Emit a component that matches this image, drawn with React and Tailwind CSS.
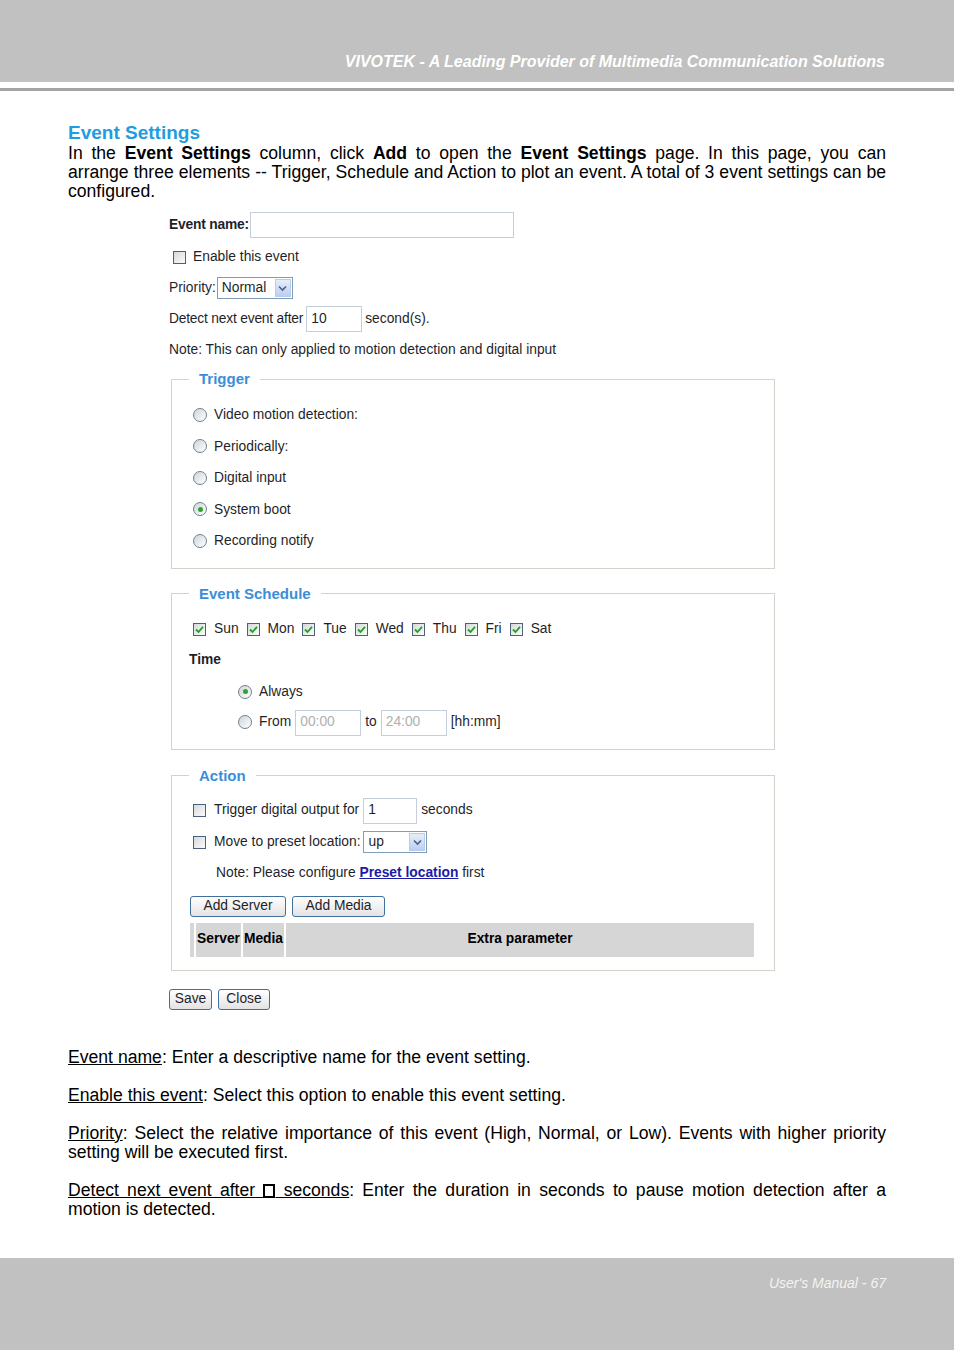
import React from "react"

function CheckBox({ checked }) {
  return (
    <span className="inline-flex w-[13px] h-[13px] shrink-0 items-center justify-center border border-[#4d6278] bg-linear-to-br from-[#d6d9dc] to-[#fbfbfb]">
      {checked && (
        <svg width="9" height="9" viewBox="0 0 9 9">
          <path d="M1 4.5 L3.5 7 L8 1.8" fill="none" stroke="#21a121" strokeWidth="1.8" />
        </svg>
      )}
    </span>
  )
}

function Radio({ checked }) {
  return (
    <span className="inline-flex w-[14px] h-[14px] shrink-0 items-center justify-center rounded-full border border-[#6f8091] bg-linear-to-br from-[#cfd4d9] to-white -translate-y-[1px]">
      {checked && <span className="w-[5px] h-[5px] rounded-full bg-[#2ca52c]" />}
    </span>
  )
}

function Select({ value, width }) {
  return (
    <span className={`inline-flex h-[22px] items-stretch border border-[#7f9db9] bg-white ${width}`}>
      <span className="flex-1 flex items-center px-[4px]">{value}</span>
      <span className="w-[16px] m-[1px] flex items-center justify-center border border-[#b9cbea] bg-linear-to-b from-[#e6eefb] to-[#bccff0]">
        <svg width="9" height="7" viewBox="0 0 9 7">
          <path d="M1 1.5 L4.5 5 L8 1.5" fill="none" stroke="#4d6185" strokeWidth="1.6" />
        </svg>
      </span>
    </span>
  )
}

function TextBox({ value, width, muted }) {
  return (
    <span
      className={`inline-flex h-[26px] items-center px-[4px] border border-[#c5cfdb] bg-white ${width} ${
        muted ? "text-[#b0b0b0]" : ""
      }`}
    >
      {value}
    </span>
  )
}

function Button({ children, width }) {
  return (
    <span
      className={`inline-flex h-[21px] items-center justify-center rounded-[3px] border border-[#41709c] bg-linear-to-b from-white to-[#e3e3e3] ${width}`}
    >
      {children}
    </span>
  )
}

function Fieldset({ legend, className, children }) {
  return (
    <fieldset className={`w-[604px] ml-[2px] border border-[#d3d3cc] ${className}`}>
      <legend className="ml-[17px] px-[10px] text-[15px] leading-[18px] font-bold text-[#3a8ed9]">
        {legend}
      </legend>
      {children}
    </fieldset>
  )
}

export default function App() {
  const days = ["Sun", "Mon", "Tue", "Wed", "Thu", "Fri", "Sat"]
  const triggers = [
    { label: "Video motion detection:", on: false },
    { label: "Periodically:", on: false },
    { label: "Digital input", on: false },
    { label: "System boot", on: true },
    { label: "Recording notify", on: false },
  ]

  return (
    <div className="w-[954px] h-[1350px] bg-white flex flex-col font-['Liberation_Sans',Arial,sans-serif] text-black">
      <header className="h-[82px] shrink-0 bg-[#c0c1c0] flex items-end justify-end pr-[69px] pb-[11px]">
        <span className="text-[16px] leading-[18px] font-bold italic text-white">
          VIVOTEK - A Leading Provider of Multimedia Communication Solutions
        </span>
      </header>
      <div className="mt-[6px] h-[3px] shrink-0 bg-[#a3a3a3]" />

      <main className="flex-1 px-[68px] pt-[31px]">
        <h2 className="text-[19px] leading-[22px] font-bold text-[#1f9de0]">Event Settings</h2>
        <div className="text-[17.6px] leading-[19px] text-justify">
          <p className="[text-align-last:justify]">
            In the <b>Event Settings</b> column, click <b>Add</b> to open the <b>Event Settings</b> page. In this
            page, you can
          </p>
          <p className="[text-align-last:justify]">
            arrange three elements -- Trigger, Schedule and Action to plot an event. A total of 3 event settings can
            be
          </p>
          <p>configured.</p>
        </div>

        {/* settings form */}
        <div className="ml-[101px] mt-[11px] text-[13.8px] text-[#1f1f2a]">
          <div className="h-[26px] flex items-center gap-[1px]">
            <span className="font-bold tracking-[-0.2px]">Event name:</span>
            <TextBox value="" width="w-[264px]" />
          </div>
          <div className="h-[22px] mt-[8px] flex items-center gap-[7px] pl-[4px]">
            <CheckBox />
            <span>Enable this event</span>
          </div>
          <div className="h-[22px] mt-[9px] flex items-center gap-[1px]">
            <span>Priority:</span>
            <Select value="Normal" width="w-[76px]" />
          </div>
          <div className="h-[26px] mt-[7px] flex items-center gap-[3px]">
            <span className="tracking-[-0.2px]">Detect next event after</span>
            <TextBox value="10" width="w-[56px]" />
            <span>second(s).</span>
          </div>
          <div className="h-[20px] mt-[8px] flex items-center">
            Note: This can only applied to motion detection and digital input
          </div>

          <Fieldset legend="Trigger" className="mt-[10px] pt-[12px] pb-[10px]">
            <div className="flex flex-col pl-[21px]">
              {triggers.map((t) => (
                <div key={t.label} className="h-[31.5px] flex items-center gap-[7px]">
                  <Radio checked={t.on} />
                  <span>{t.label}</span>
                </div>
              ))}
            </div>
          </Fieldset>

          <Fieldset legend="Event Schedule" className="mt-[16px] pt-[16px] pb-[13px]">
            <div className="h-[22px] flex items-center pl-[21px]">
              {days.map((d) => (
                <span key={d} className="flex items-center gap-[8px] mr-[8px]">
                  <CheckBox checked />
                  <span>{d}</span>
                </span>
              ))}
            </div>
            <div className="h-[20px] mt-[10px] flex items-center pl-[17px] font-bold">Time</div>
            <div className="h-[22px] mt-[11px] flex items-center gap-[7px] pl-[66px]">
              <Radio checked />
              <span>Always</span>
            </div>
            <div className="h-[26px] mt-[6px] flex items-center gap-[4px] pl-[66px]">
              <Radio />
              <span className="ml-[3px]">From</span>
              <TextBox value="00:00" width="w-[66px]" muted />
              <span>to</span>
              <TextBox value="24:00" width="w-[66px]" muted />
              <span>[hh:mm]</span>
            </div>
          </Fieldset>

          <Fieldset legend="Action" className="mt-[17px] pt-[13px] pb-[13px]">
            <div className="h-[26px] flex items-center gap-[4px] pl-[21px]">
              <CheckBox />
              <span className="ml-[4px]">Trigger digital output for</span>
              <TextBox value="1" width="w-[54px]" />
              <span>seconds</span>
            </div>
            <div className="h-[23px] mt-[7px] flex items-center gap-[3px] pl-[21px]">
              <CheckBox />
              <span className="ml-[5px]">Move to preset location:</span>
              <Select value="up" width="w-[64px]" />
            </div>
            <div className="h-[20px] mt-[10px] flex items-center pl-[44px]">
              <span>
                Note: Please configure{" "}
                <a className="font-bold text-[#1b1ba8] underline">Preset location</a> first
              </span>
            </div>
            <div className="mt-[12px] flex gap-[6px] pl-[18px]">
              <Button width="w-[96px]">Add Server</Button>
              <Button width="w-[93px]">Add Media</Button>
            </div>
            <div className="mt-[6px] ml-[18px] w-[564px] h-[34px] flex gap-[2px] font-bold text-black">
              <span className="w-[4px] bg-[#d6d6d6]" />
              <span className="w-[45px] bg-[#d6d6d6] flex items-center justify-center">Server</span>
              <span className="w-[41px] bg-[#d6d6d6] flex items-center justify-center">Media</span>
              <span className="flex-1 bg-[#d6d6d6] flex items-center justify-center">Extra parameter</span>
            </div>
          </Fieldset>

          <div className="mt-[18px] flex gap-[6px]">
            <Button width="w-[43px]">Save</Button>
            <Button width="w-[52px]">Close</Button>
          </div>
        </div>

        {/* field descriptions */}
        <div className="mt-[38px] text-[17.6px] leading-[19px] flex flex-col gap-[19px]">
          <p>
            <span className="underline">Event name</span>: Enter a descriptive name for the event setting.
          </p>
          <p>
            <span className="underline">Enable this event</span>: Select this option to enable this event setting.
          </p>
          <p className="text-justify">
            <span className="underline">Priority</span>: Select the relative importance of this event (High, Normal,
            or Low). Events with higher priority setting will be executed first.
          </p>
          <p className="text-justify">
            <span className="underline">
              Detect next event after{" "}
              <span className="inline-block w-[12px] h-[14px] border-2 border-black align-[-2px]" /> seconds
            </span>
            : Enter the duration in seconds to pause motion detection after a motion is detected.
          </p>
        </div>
      </main>

      <footer className="h-[92px] shrink-0 bg-[#c0c1c0] flex justify-end pr-[68px] pt-[17px]">
        <span className="text-[14px] leading-[16px] italic text-[#f4f4f4]">User's Manual - 67</span>
      </footer>
    </div>
  )
}
